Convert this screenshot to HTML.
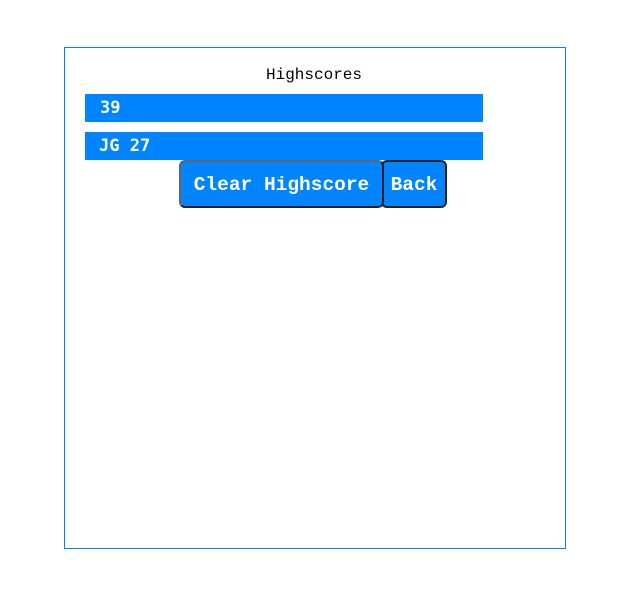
<!DOCTYPE html>
<html><head><style>
body{margin:0;width:638px;height:595px;background:#fff;position:relative;font-family:"Liberation Mono",monospace;}
.box{position:absolute;left:64px;top:47px;width:500px;height:500px;border:1px solid #0a7ff0;}
.t{position:absolute;left:0;width:628px;top:66px;text-align:center;font-size:16px;color:#000;}
.row{position:absolute;left:85px;width:398px;height:28px;background:#0084ff;color:#fff;font-family:"DejaVu Sans Mono",monospace;font-weight:bold;font-size:17px;line-height:28px;}
.btn{position:absolute;top:160px;height:44px;background:#0084ff;color:#fff;border:2px solid #333;border-radius:6px;font-size:19.5px;font-weight:bold;line-height:46px;text-align:center;box-sizing:content-box;white-space:nowrap;}
</style></head><body>
<div class="box"></div>
<div class="t">Highscores</div>
<div class="row" style="top:94px;padding-left:15px;width:383px">39</div>
<div class="row" style="top:132px;padding-left:14px;width:384px">JG 27</div>
<div class="btn" style="left:381px;width:62px;border-color:#222">Back</div>
<div class="btn" style="left:179px;width:201px;border-color:#666 #222 #222 #666">Clear Highscore</div>
</body></html>
